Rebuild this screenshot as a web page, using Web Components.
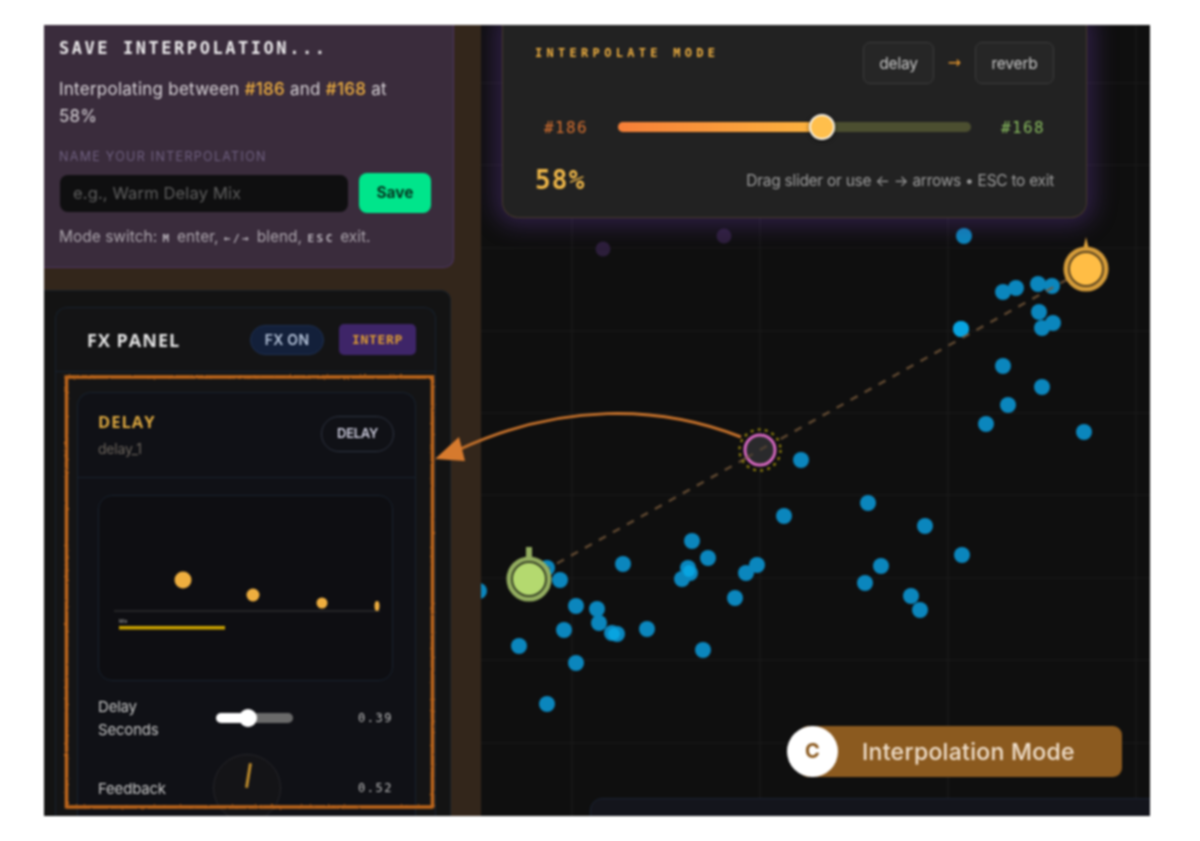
<!DOCTYPE html>
<html><head><meta charset="utf-8">
<style>
html,body{margin:0;background:#fff}
body{padding:25px 50px 25px 44px;font-family:Inter,"Liberation Sans",sans-serif}
</style></head>
<body>
<x-app>
  <x-side slot="side">
    <x-save-panel></x-save-panel>
    <x-fx-panel></x-fx-panel>
  </x-side>
  <x-stage slot="stage"></x-stage>
</x-app>
<script>
const def=(name,html)=>customElements.define(name,class extends HTMLElement{
  constructor(){super();this.attachShadow({mode:'open'}).innerHTML=html}
});
const MONO='"DejaVu Sans Mono","Liberation Mono",monospace';

def('x-app',`<style>
:host{display:grid;grid-template-columns:437px 669px;width:1106px;height:791px;overflow:hidden;position:relative;filter:blur(1px);background:#0f0f0f}
svg{position:absolute;left:0;top:0;width:1106px;height:791px;pointer-events:none}
</style>
<slot name="side"></slot><slot name="stage"></slot>
<svg viewBox="44 25 1106 791">
  <defs><filter id="rough" x="-5%" y="-5%" width="110%" height="110%">
    <feTurbulence type="fractalNoise" baseFrequency=".5" numOctaves="2" seed="4"/>
    <feDisplacementMap in="SourceGraphic" scale="2.2"/></filter></defs>
  <rect x="66.5" y="377" width="366" height="430" fill="none" stroke="#bb651d" stroke-width="3.6" filter="url(#rough)"/>
  <path d="M741 437C660 405 560 402 456 451" fill="none" stroke="#c2702b" stroke-width="3"/>
  <path d="M435 459L459 437L465 461Z" fill="#d67a2e"/>
</svg>
<x-callout></x-callout>`);

def('x-side',`<style>
:host{display:flex;flex-direction:column;gap:22px;height:791px;background:#33261b;overflow:hidden}
</style><slot></slot>`);

def('x-save-panel',`<style>
:host{display:block;flex:none;box-sizing:border-box;width:410px;height:243px;padding:13px 15px 0;background:#3a2c3c;border:solid #4c3560;border-width:0 1px 1px 0;border-radius:0 0 10px 0;color:#d8d3d8}
h2{margin:0;font:700 17px/20px ${MONO};letter-spacing:2.55px;color:#e8e6e8}
p{margin:18px 0 0;line-height:27px;width:345px;font-size:17px;letter-spacing:.25px}
b{font-weight:500;color:#eeae3f}
label{display:block;margin-top:19px;font-size:12.5px;line-height:16px;color:#6f6080;letter-spacing:1.3px}
.row{display:flex;gap:11px;align-items:center;margin-top:8px;margin-left:1px}
.in{box-sizing:border-box;width:288px;height:37px;padding-left:13px;background:#0f0f10;border-radius:8px;color:#5e5e5e;font-size:16.5px;letter-spacing:.15px;line-height:36px}
.btn{width:72px;height:40px;border-radius:8px;background:#00e58b;color:#06331f;font-weight:700;font-size:15.5px;line-height:40px;text-align:center}
.hint{margin-top:14px;font-size:15.5px;line-height:20px;color:#a9a2aa}
kbd{font:700 11px ${MONO};color:#bdb7bf;letter-spacing:2.5px;margin:0 1px}
</style>
<h2>SAVE INTERPOLATION...</h2>
<p>Interpolating between <b>#186</b> and <b>#168</b> at<br>58%</p>
<label>NAME YOUR INTERPOLATION</label>
<div class="row"><div class="in">e.g., Warm Delay Mix</div><div class="btn">Save</div></div>
<div class="hint">Mode switch: <kbd>M</kbd> enter, <kbd>←/→</kbd> blend, <kbd>ESC</kbd> exit.</div>`);

def('x-fx-panel',`<style>
:host{display:block;box-sizing:border-box;width:407px;flex:1;padding:16px 14px 0 11px;background:#131313;border:solid #18212a;border-width:1px 1px 0 0;border-radius:0 10px 0 0}
.card{box-sizing:border-box;height:520px;border:1px solid #18222e;border-bottom:0;border-radius:12px 12px 0 0;background:#141415}
.head{display:flex;align-items:center;height:63px;padding:0 19px 0 31px;gap:15px;border-bottom:1px solid #18222e}
h3{margin:0 auto 0 0;font:700 18px "Open Sans","Liberation Sans",sans-serif;letter-spacing:1px;color:#e2e2e2}
.on{box-sizing:border-box;width:74px;height:30px;border-radius:15px;background:#13203a;border:1px solid #1e3050;color:#b4c2d8;font:600 14px/27px Inter,sans-serif;text-align:center;letter-spacing:.3px}
.it{width:77px;height:31px;border-radius:5px;background:#3e2568;color:#dd9c32;font:700 13px/31px ${MONO};text-align:center;letter-spacing:.7px}
.body{padding:20px 19px 0 21px}
</style>
<div class="card">
  <div class="head"><h3>FX PANEL</h3><div class="on">FX ON</div><div class="it">INTERP</div></div>
  <div class="body"><x-delay-card></x-delay-card></div>
</div>`);

def('x-delay-card',`<style>
:host{display:block;box-sizing:border-box;height:460px;border:1px solid #18222e;border-bottom:0;border-radius:14px 14px 0 0;background:#101116;color:#cfcfcf}
.top{box-sizing:border-box;height:85px;display:flex;justify-content:space-between;align-items:flex-start;padding:17px 21px 0 20px;border-bottom:1px solid #18222e}
h4{margin:0;font:700 16.5px/24px "Open Sans","Liberation Sans",sans-serif;letter-spacing:1px;color:#d9a53f}
.sub{font-size:14px;line-height:18px;margin-top:6px;color:#6b645c;letter-spacing:-.2px}
.chip{box-sizing:border-box;width:73px;height:36px;margin-top:6px;border-radius:18px;border:1.5px solid #2e3442;font:600 13px/33px Inter,sans-serif;text-align:center;color:#ccd;letter-spacing:-.3px}
.main{padding:17px 22px 0 20px}
.viz{box-sizing:border-box;height:186px;border:1px solid #18222e;border-radius:14px;background:#0e0e12;overflow:hidden}
.viz svg{display:block}
.row{display:grid;grid-template-columns:118px 77px 1fr;align-items:center;font-size:15px;line-height:23px;letter-spacing:-.2px;color:#c4c4c4}
.row i{font:500 12px ${MONO};text-align:right;color:#bcbcbc;letter-spacing:1.5px}
.r1{margin-top:14px;height:46px}
.r2{margin-top:12px;height:70px}
.sl{position:relative;height:10px;border-radius:5px;background:linear-gradient(90deg,#fff 42%,#6a6a6a 42%)}
.sl::after{content:"";position:absolute;left:23px;top:-4px;width:18px;height:18px;border-radius:50%;background:#fff}
.knob{box-sizing:border-box;width:68px;height:68px;margin-left:-3px;border-radius:50%;border:1.5px solid #26262a;background:#141417;position:relative}
.knob::after{content:"";position:absolute;left:33px;top:8px;width:3px;height:25px;background:#bd8b2c;transform:rotate(9deg)}
</style>
<div class="top"><div><h4>DELAY</h4><div class="sub">delay_1</div></div><div class="chip">DELAY</div></div>
<div class="main">
  <div class="viz"><svg width="294" height="186" viewBox="98 495 294 186">
    <line x1="113" y1="610" x2="379" y2="610" stroke="#2c2c2e" stroke-width="1.4"/>
    <circle cx="182" cy="579" r="8.5" fill="#eeae3f"/><circle cx="252" cy="594" r="6.5" fill="#eeae3f"/>
    <circle cx="321" cy="602" r="5.5" fill="#eeae3f"/><ellipse cx="376" cy="605" rx="2.5" ry="5" fill="#eeae3f"/>
    <text x="118" y="622" font-size="5" fill="#aaa" font-family="Inter,sans-serif">Mix</text>
    <rect x="118" y="625" width="106" height="3.5" fill="#c9a100"/>
  </svg></div>
  <div class="row r1"><span>Delay<br>Seconds</span><div class="sl"></div><i>0.39</i></div>
  <div class="row r2"><span>Feedback</span><div class="knob"></div><i>0.52</i></div>
</div>`);

const dots=[[547,568],[560,580],[623,564],[692,541],[708,558],[688,568],[690,573],[682,579],[746,573],[757,565],[735,598],[576,606],[597,609],[599,623],[612,633],[617,634],[647,629],[564,630],[519,646],[576,663],[703,650],[547,704],[479,591],[801,460],[784,516],[868,503],[865,583],[881,566],[925,526],[911,596],[920,610],[962,555],[964,236],[1003,292],[1016,288],[1038,284],[1052,286],[1039,312],[1053,323],[1042,328],[961,329],[1003,366],[1042,387],[1008,405],[986,424],[1084,432]];
const lines=[];
for(const x of [572,760,948,1136])lines.push(`<line x1="${x}" y1="25" x2="${x}" y2="816"/>`);
for(const y of [83,165,248,331,413,495,578,660,743])lines.push(`<line x1="481" y1="${y}" x2="1150" y2="${y}"/>`);
def('x-stage',`<style>
:host{display:block;position:relative;height:791px;background:#0f0f0f;overflow:hidden}
svg{position:absolute;left:0;top:0}
.bottom{position:absolute;left:109px;right:-10px;top:773px;height:40px;background:#14151c;border:1px solid #1b2333;border-radius:12px 0 0 0}
</style>
<svg width="669" height="791" viewBox="481 25 669 791">
  <g stroke="#1c1c1c" stroke-width="1.2">${lines.join('')}</g>
  <circle cx="603" cy="249" r="7.5" fill="#2c1e3a"/><circle cx="724" cy="236" r="7.5" fill="#2c1e3a"/>
  <g fill="#0b86bd">${dots.map(d=>`<circle cx="${d[0]}" cy="${d[1]}" r="8"/>`).join('')}</g>
  <circle cx="961" cy="329" r="8" fill="#08a4e0"/><circle cx="689" cy="571" r="6" fill="#08a4e0"/><circle cx="614" cy="634" r="6" fill="#08a4e0"/>
  <line x1="529" y1="579" x2="1086" y2="269" stroke="#75583a" stroke-width="2.4" stroke-dasharray="8 8" opacity=".8"/>
  <rect x="526" y="547" width="6" height="12" fill="#93ad60"/>
  <circle cx="529" cy="579" r="21" fill="#93ad60" stroke="#93ad60" stroke-width="3"/>
  <circle cx="529" cy="579" r="17" fill="#b4d96f" stroke="#3a4528" stroke-width="2"/>
  <path d="M1083 250L1086 237L1089 250Z" fill="#e3a63e"/>
  <circle cx="1086" cy="269" r="21" fill="#d59c3a" stroke="#d59c3a" stroke-width="3"/>
  <circle cx="1086" cy="269" r="17" fill="#ffbd45" stroke="#5a4420" stroke-width="2"/>
  <circle cx="760" cy="450" r="15" fill="#2a2a2c" stroke="#d065ba" stroke-width="3"/>
  <circle cx="760" cy="450" r="20.5" fill="none" stroke="#8a7a10" stroke-width="2.4" stroke-dasharray="3 4.2"/>
  <line x1="746" y1="458" x2="772" y2="443" stroke="#75583a" stroke-width="2.4" stroke-dasharray="8 8" opacity=".5"/>
</svg>
<x-interp-panel></x-interp-panel>
<div class="bottom"></div>`);

def('x-interp-panel',`<style>
:host{position:absolute;left:21px;top:-1px;box-sizing:border-box;width:585px;height:194px;padding:0 32px;background:#222;border:1px solid #46392c;border-top:0;border-radius:0 0 16px 16px;box-shadow:0 0 22px 8px rgba(88,52,140,.42);color:#ddd}
.a{display:flex;align-items:center;height:59px;margin-top:9px}
.t{font:700 12px ${MONO};letter-spacing:4.3px;color:#f0b040;margin-right:auto;margin-top:-20px}
.c{box-sizing:border-box;height:42px;border:1.5px solid #3c3c3c;border-radius:7px;background:#262626;font-size:15.5px;line-height:42px;text-align:center;color:#c6c6c6;letter-spacing:-.2px}
.ar{width:41px;text-align:center;color:#e3962e;font:400 16px "DejaVu Sans",sans-serif}
.b{display:grid;grid-template-columns:83px 353px 1fr;align-items:center;height:70px;font:500 16px ${MONO};letter-spacing:1.4px}
.o{color:#d9712f;padding-left:9px}.g{color:#88bb5f;padding-left:30px}
.tr{position:relative;height:10px;border-radius:5px;background:#4c4f30}
.fill{height:100%;width:58%;border-radius:5px;background:linear-gradient(90deg,#f77f38,#fdb53f)}
.th{position:absolute;left:191px;top:-8px;box-sizing:border-box;width:26px;height:26px;border-radius:50%;background:#ffbf4c;border:2.5px solid #f4f0e6;box-shadow:0 1px 4px #0008}
.d{display:flex;align-items:center;justify-content:space-between;height:34px;margin-top:1px}
.p{font:700 26px ${MONO};color:#eeb648;letter-spacing:1.2px}
.h{font-size:15.5px;color:#9c9c9c;letter-spacing:-.28px}
</style>
<div class="a"><div class="t">INTERPOLATE MODE</div><div class="c" style="width:71px">delay</div><div class="ar">→</div><div class="c" style="width:79px">reverb</div></div>
<div class="b"><span class="o">#186</span><div class="tr"><div class="fill"></div><div class="th"></div></div><span class="g">#168</span></div>
<div class="d"><span class="p">58%</span><span class="h">Drag slider or use ← → arrows • ESC to exit</span></div>`);

def('x-callout',`<style>
:host{position:absolute;left:743px;top:701px;display:flex;align-items:center;width:335px;height:51px;font-family:Inter,"Liberation Sans",sans-serif}
.pill{position:absolute;left:12px;right:0;top:0;bottom:0;background:#8b5a1f;border-radius:9px;padding-left:63px;font-size:23px;font-weight:500;letter-spacing:.3px;line-height:53px;color:#f0dfcb}
.c{position:relative;width:51px;height:51px;border-radius:50%;background:#fff;color:#8b5a1f;font:700 20px/51px Inter,sans-serif;text-align:center}
</style><div class="pill">Interpolation Mode</div><div class="c">C</div>`);
</script>
</body></html>
